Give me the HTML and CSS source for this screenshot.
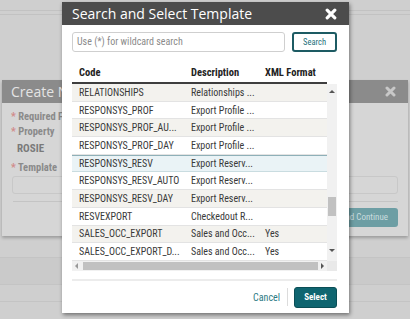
FILE: index.html
```html
<!DOCTYPE html>
<html lang="en">
<head>
  <meta charset="UTF-8">
  <title>Search and Select Template</title>
  <link rel="stylesheet" href="styles.css">
</head>
<body>

<div class="page">
  <div class="page-top"></div>
  <div class="page-gap"></div>
  <div class="strip"></div>
  <div class="strip strip-dark"></div>
  <div class="strip"></div>
</div>

<div class="back-dialog">
  <div class="back-head">
    <span class="back-title">Create New Export</span>
    <svg class="back-close" width="11" height="11" viewBox="0 0 11 11"><path d="M2 2 L9 9 M9 2 L2 9" stroke="#c8c8c8" stroke-width="3" stroke-linecap="round"/></svg>
  </div>
  <div class="back-body">
    <div class="back-req"><span class="star">*</span> Required Fields</div>
    <div class="back-label"><span class="star">*</span> Property</div>
    <div class="back-input back-filled">ROSIE</div>
    <div class="back-label"><span class="star">*</span> Template</div>
    <div class="back-input"></div>
    <div class="back-rule"></div>
    <div class="back-actions"><span class="back-btn">Save and Continue</span></div>
  </div>
</div>

<div class="modal">
  <div class="modal-head">
    <span class="modal-title">Search and Select Template</span>
    <svg class="modal-close" width="12" height="12" viewBox="0 0 12 12"><path d="M2.2 2.2 L9.8 9.8 M9.8 2.2 L2.2 9.8" stroke="#fff" stroke-width="3.2" stroke-linecap="round"/></svg>
  </div>
  <div class="modal-body">
    <div class="search-row">
      <div class="search-input">Use (*) for wildcard search</div>
      <button class="search-btn">Search</button>
    </div>

    <div class="grid">
      <div class="grid-head">
        <span class="c-code">Code</span>
        <span class="c-desc">Description</span>
        <span class="c-xml">XML Format</span>
      </div>
      <div class="grid-main">
        <div class="rows">
          <div class="row alt"><span class="c-code">RELATIONSHIPS</span><span class="c-desc">Relationships ...</span><span class="c-xml"></span></div>
          <div class="row"><span class="c-code">RESPONSYS_PROF</span><span class="c-desc">Export Profile ...</span><span class="c-xml"></span></div>
          <div class="row alt"><span class="c-code">RESPONSYS_PROF_AU...</span><span class="c-desc">Export Profile ...</span><span class="c-xml"></span></div>
          <div class="row"><span class="c-code">RESPONSYS_PROF_DAY</span><span class="c-desc">Export Profile ...</span><span class="c-xml"></span></div>
          <div class="row selected"><span class="c-code">RESPONSYS_RESV</span><span class="c-desc">Export Reserv...</span><span class="c-xml"></span></div>
          <div class="row"><span class="c-code">RESPONSYS_RESV_AUTO</span><span class="c-desc">Export Reserv...</span><span class="c-xml"></span></div>
          <div class="row alt"><span class="c-code">RESPONSYS_RESV_DAY</span><span class="c-desc">Export Reserv...</span><span class="c-xml"></span></div>
          <div class="row"><span class="c-code">RESVEXPORT</span><span class="c-desc">Checkedout R...</span><span class="c-xml"></span></div>
          <div class="row alt"><span class="c-code">SALES_OCC_EXPORT</span><span class="c-desc">Sales and Occ...</span><span class="c-xml">Yes</span></div>
          <div class="row"><span class="c-code">SALES_OCC_EXPORT_D...</span><span class="c-desc">Sales and Occ...</span><span class="c-xml">Yes</span></div>
        </div>
        <div class="vscroll">
          <span class="arrow-up"></span>
          <span class="vthumb"></span>
          <span class="arrow-down"></span>
        </div>
      </div>
      <div class="hscroll">
        <span class="arrow-left"></span>
        <span class="hthumb"></span>
        <span class="arrow-right"></span>
        <span class="corner"></span>
      </div>
    </div>

    <div class="sep"></div>

    <div class="footer">
      <span class="cancel">Cancel</span>
      <span class="divider"></span>
      <button class="select-btn">Select</button>
    </div>
  </div>
</div>

</body>
</html>
```

FILE: styles.css
```css
body {
  margin: 0;
  width: 410px;
  height: 319px;
  overflow: hidden;
  background-color: #cfcfcf;
  font-family: "Roboto Condensed", "Liberation Sans Narrow", sans-serif;
  color: #333;
  position: relative;
}
.page {
  display: flex;
  flex-direction: column;
}
.page-top {
  margin-top: 10px;
  height: 3px;
  border-top: 1px solid #c2c2c2;
  border-bottom: 1px solid #c2c2c2;
}
.page-gap {
  height: 226px;
}
.strip {
  height: 16px;
  border-bottom: 1px solid #c4c4c4;
}
.strip-dark {
  height: 26px;
  background-color: #cacaca;
}

/* dialog behind the overlay */
.back-dialog {
  position: absolute;
  left: 2px;
  top: 80px;
  width: 406px;
  height: 156px;
  background-color: #d6d6d6;
  box-shadow: 0 2px 3px rgba(0, 0, 0, 0.25);
}
.back-head {
  height: 23px;
  background-color: #8b8b8b;
  color: #e4e4e4;
  font-family: "Open Sans", sans-serif;
  font-size: 14px;
  display: flex;
  align-items: center;
  justify-content: space-between;
  padding: 0 12px 0 9px;
}
.back-title {
  width: 51px;
  overflow: hidden;
  white-space: nowrap;
}
.back-body {
  padding: 7px 9px 0 9px;
  font-size: 10.5px;
  color: #8a8a8a;
  font-weight: 700;
}
.star {
  color: #d18a8a;
}
.back-req,
.back-label {
  width: 51px;
  overflow: hidden;
  white-space: nowrap;
  height: 14px;
  line-height: 14px;
}
.back-req {
  height: 15px;
}
.back-input {
  height: 16px;
  border: 1px solid #c8c8c8;
  border-radius: 3px;
  margin: 1px 1px 3px 1px;
  padding-left: 4px;
  line-height: 16px;
  font-size: 11px;
  color: #7a7a7a;
}
.back-filled {
  border-color: #d6d6d6;
  background-color: #d6d6d6;
}
.back-rule {
  border-top: 1px solid #c4c4c4;
  margin: 7px 1px 0 2px;
}
.back-actions {
  display: flex;
  justify-content: flex-end;
  padding: 6px 1px 0 0;
}
.back-btn {
  background-color: #6d9ea4;
  color: #c9dcdf;
  border-radius: 3px;
  font-size: 9px;
  font-weight: 400;
  height: 19px;
  line-height: 19px;
  padding: 0 10px;
}

/* search modal */
.modal {
  position: absolute;
  left: 62px;
  top: 2px;
  width: 287px;
  height: 311px;
  background-color: #fff;
  box-shadow: 1px 2px 4px rgba(0, 0, 0, 0.45);
}
.modal-head {
  height: 23px;
  background-color: #4c4c4c;
  display: flex;
  align-items: center;
  justify-content: space-between;
  padding: 0 12px 0 10px;
}
.modal-title {
  color: #fff;
  font-family: "Open Sans", sans-serif;
  font-size: 14px;
}
.modal-body {
  padding: 0 12px 0 10px;
}
.search-row {
  display: flex;
  margin-top: 7px;
  height: 20px;
}
.search-input {
  width: 207px;
  border: 1px solid #cfcfcf;
  border-radius: 3px;
  font-size: 10px;
  color: #8a8a8a;
  padding-left: 4px;
  line-height: 18px;
  margin-right: 7px;
}
.search-btn {
  width: 45px;
  height: 20px;
  background-color: #fff;
  border: 2px solid #1d5b63;
  border-radius: 3px;
  color: #23717b;
  font-family: inherit;
  font-size: 8.5px;
  padding: 0;
}
.grid {
  margin-top: 10px;
  width: 265px;
}
.grid-head {
  display: flex;
  width: 255px;
  height: 20px;
  align-items: center;
  border-bottom: 2px solid #3e3e3e;
  font-size: 10.5px;
  font-weight: 700;
  color: #222;
}
.c-code {
  width: 112px;
  padding-left: 7px;
  white-space: nowrap;
}
.c-desc {
  width: 74px;
  white-space: nowrap;
}
.c-xml {
  white-space: nowrap;
}
.grid-main {
  display: flex;
}
.rows {
  width: 255px;
}
.row {
  display: flex;
  align-items: center;
  height: 16.7px;
  border-bottom: 1px solid #e3e3e3;
  font-size: 10px;
  color: #3a3a3a;
  background-color: #fff;
}
.row.alt {
  background-color: #f3f2ee;
}
.row.selected {
  background-color: #eaf3f6;
  border-top: 1px solid #8eb0b8;
  height: 15.7px;
  border-bottom-color: #c9dce0;
}
.vscroll {
  width: 10px;
  background-color: #f1f1f1;
  display: flex;
  flex-direction: column;
  align-items: center;
}
.arrow-up {
  margin-top: 6px;
  border-left: 3px solid transparent;
  border-right: 3px solid transparent;
  border-bottom: 3px solid #555;
}
.vthumb {
  margin-top: 104px;
  width: 8px;
  height: 19px;
  background-color: #c1c1c1;
}
.arrow-down {
  margin-top: 33px;
  border-left: 3px solid transparent;
  border-right: 3px solid transparent;
  border-top: 3px solid #555;
}
.hscroll {
  display: flex;
  align-items: center;
  height: 10px;
  background-color: #f1f1f1;
}
.arrow-left {
  margin-left: 3px;
  border-top: 3px solid transparent;
  border-bottom: 3px solid transparent;
  border-right: 3px solid #999;
}
.hthumb {
  margin-left: 5px;
  width: 240px;
  height: 8px;
  background-color: #c1c1c1;
}
.arrow-right {
  margin-left: 3px;
  border-top: 3px solid transparent;
  border-bottom: 3px solid transparent;
  border-left: 3px solid #555;
}
.corner {
  margin-left: 3px;
  width: 10px;
  height: 10px;
  background-color: #e9e9e9;
}
.sep {
  margin-top: 8px;
  height: 2px;
  background-color: #ececec;
}
.footer {
  display: flex;
  justify-content: flex-end;
  align-items: center;
  margin-top: 6px;
  height: 21px;
}
.cancel {
  color: #2c7a84;
  font-size: 10px;
}
.divider {
  width: 1px;
  height: 18px;
  background-color: #dcdcdc;
  margin: 0 6px 0 7px;
}
.select-btn {
  width: 43px;
  height: 21px;
  background-color: #0f6570;
  border: 1px solid #0b4e56;
  border-radius: 3px;
  color: #fff;
  font-family: inherit;
  font-size: 9px;
  font-weight: 700;
  padding: 0;
}
```
